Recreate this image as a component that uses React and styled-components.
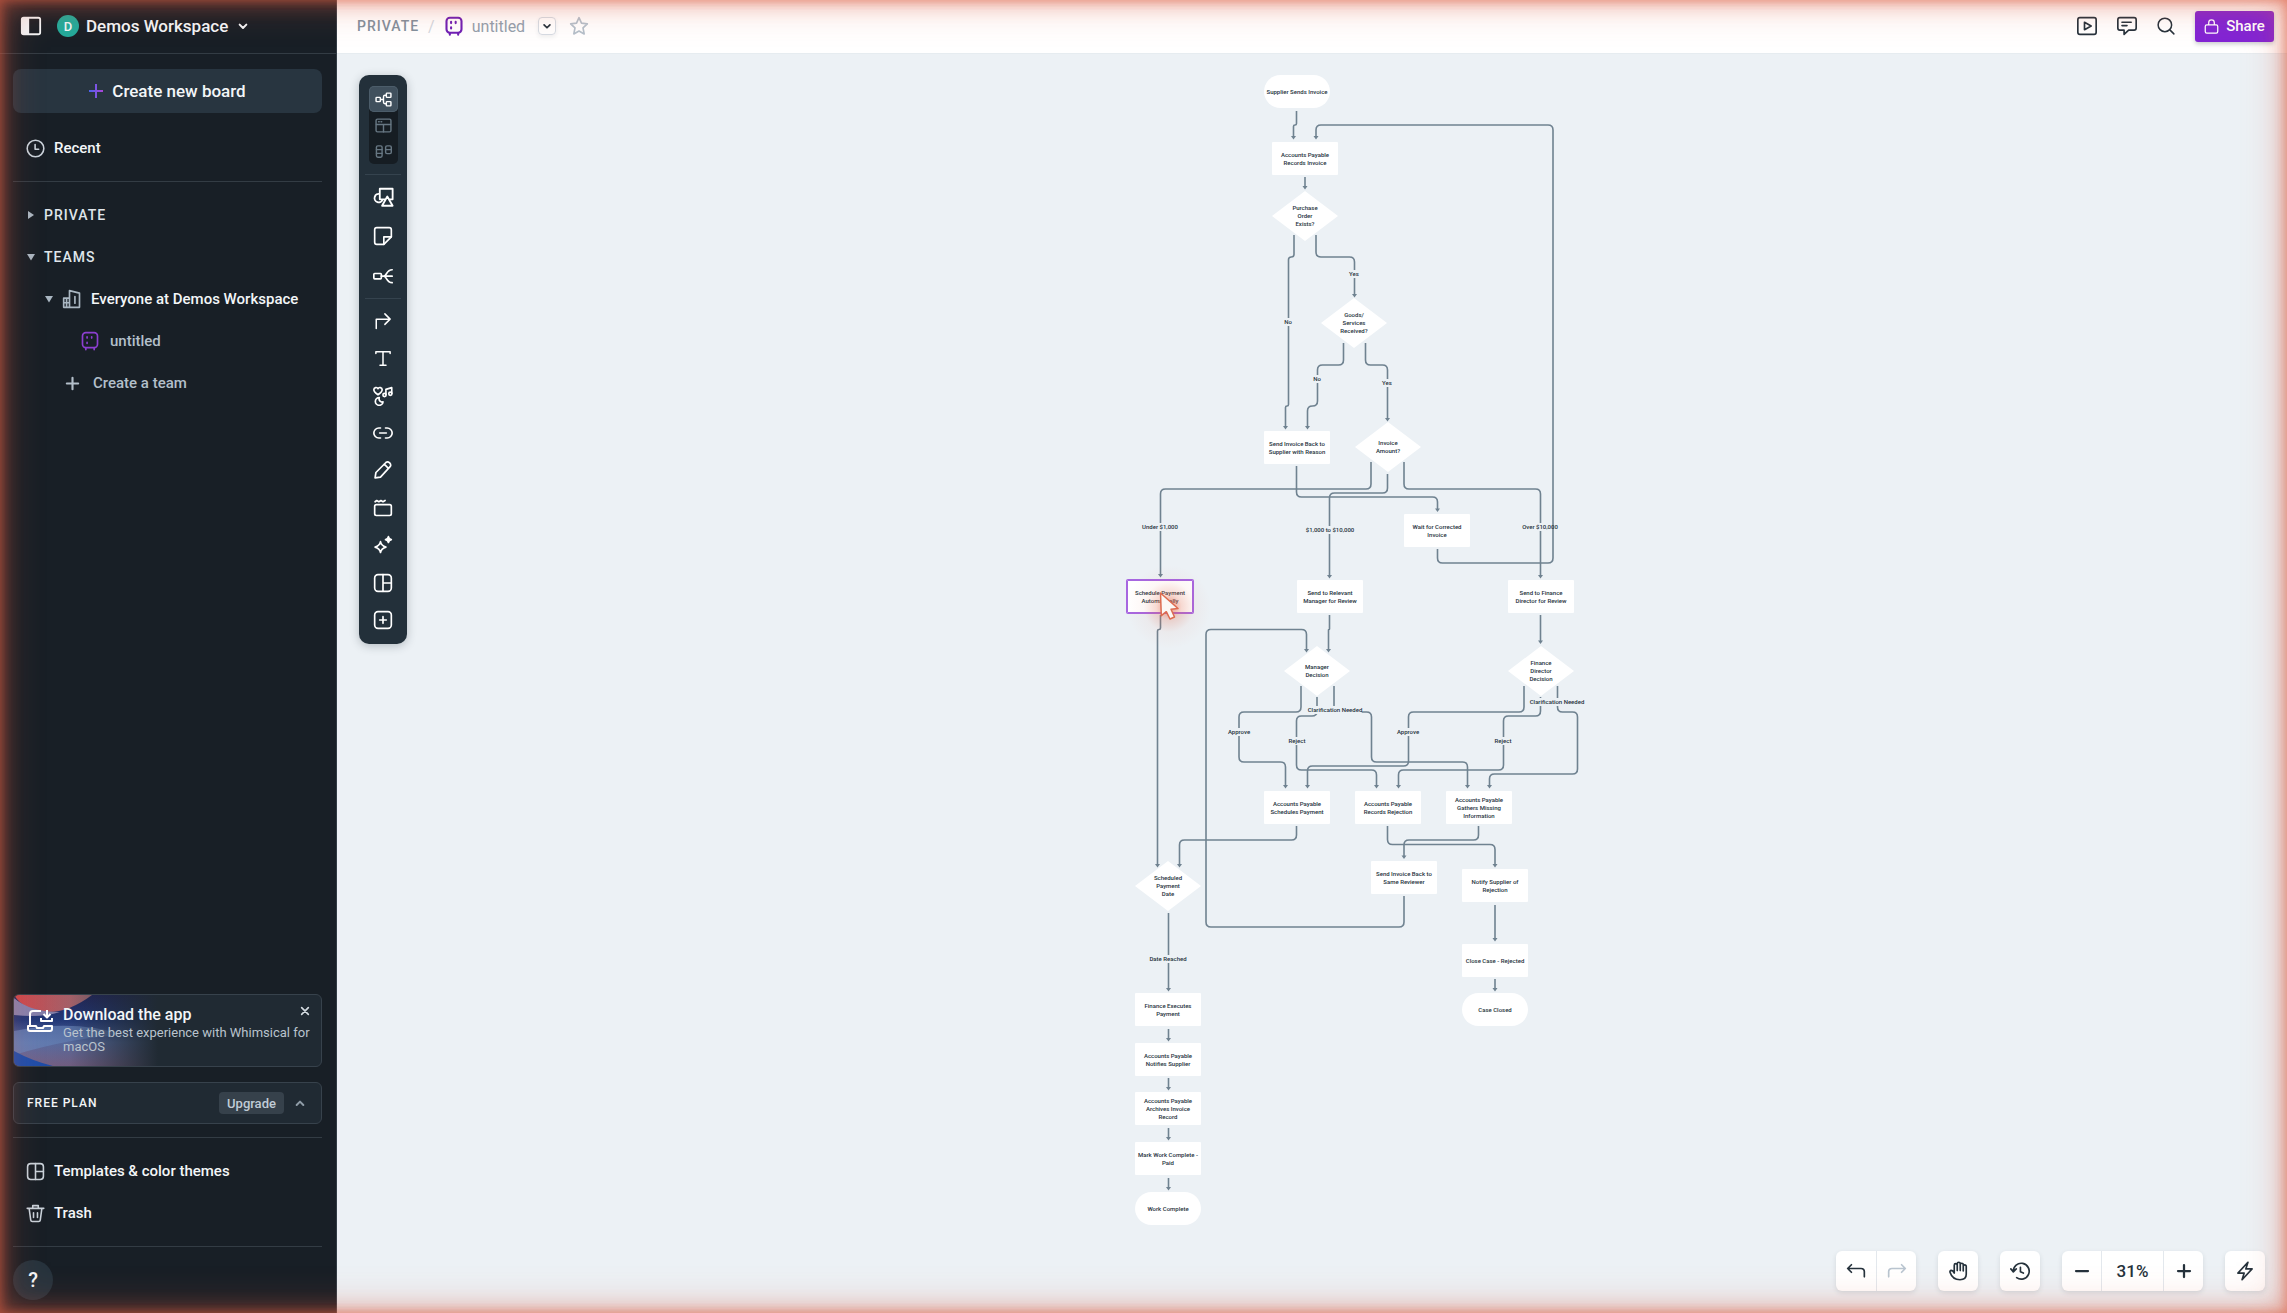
import React, { useState } from "react";
import styled, { createGlobalStyle, css } from "styled-components";

const GlobalStyle = createGlobalStyle`
    * {
        box-sizing: border-box;
    }

    body {
        margin: 0;
        font-family: Roboto, "Liberation Sans", sans-serif;
        font-size: 16px;
        color: #25323c;
    }

    button {
        font: inherit;
        color: inherit;
        background: none;
        border: none;
        padding: 0;
        cursor: pointer;
    }

    a {
        color: inherit;
        text-decoration: none;
    }

    svg {
        display: block;
        flex: none;
    }
`;

const Page = styled.div`
    display: grid;
    grid-template-columns: 337px minmax(0, 1fr);
    height: 100vh;
    overflow: hidden;
`;

/* ---------- sidebar ---------- */

const SidebarContainer = styled.aside`
    display: flex;
    flex-direction: column;
    background-color: #181f26;
    border-right: 1px solid #323c45;
    color: #f3f6f8;
    min-height: 0;
`;

const SidebarHeader = styled.header`
    display: flex;
    align-items: center;
    height: 54px;
    padding: 0 20px 1px;
    border-bottom: 1px solid #333c44;
`;

const WorkspaceButton = styled.button`
    display: flex;
    align-items: center;
    gap: 7px;
    margin-left: 15px;
    font-size: 17px;
    font-weight: 500;
`;

const Avatar = styled.span`
    display: grid;
    place-items: center;
    width: 22px;
    height: 22px;
    border-radius: 50%;
    background-color: #22ab9b;
    font-size: 13px;
`;

const SidebarBody = styled.div`
    display: flex;
    flex-direction: column;
    flex: 1;
    padding: 15px 14px 13px 13px;
`;

const CreateButton = styled.button`
    display: flex;
    align-items: center;
    justify-content: center;
    gap: 9px;
    height: 44px;
    margin-bottom: 14px;
    border-radius: 8px;
    background-color: #283540;
    font-size: 17px;
    font-weight: 500;
`;

const Divider = styled.hr`
    width: 100%;
    height: 1px;
    margin: ${(props) => props.$margin || "0"};
    border: none;
    background-color: #333c44;
`;

const NavRow = styled.a`
    display: flex;
    align-items: center;
    gap: ${(props) => props.$gap || 9}px;
    height: 42px;
    padding-left: ${(props) => props.$indent || 13}px;
    color: ${(props) => (props.$muted ? "#b3bfca" : "#f3f6f8")};
    font-size: 15px;
    font-weight: 500;
`;

const SectionRow = styled(NavRow).attrs({ as: "button" })`
    padding-left: 14px;
    color: #dfe5ea;
    font-size: 14px;
    letter-spacing: 1px;
`;

const Spacer = styled.div`
    flex: 1;
`;

const DownloadCard = styled.section`
    position: relative;
    display: flex;
    align-items: flex-start;
    height: 73px;
    padding: 11px 11px 0 13px;
    border: 1px solid #37424c;
    border-radius: 6px;
    background-color: #202a33;
    overflow: hidden;
`;

const DownloadArt = styled.svg`
    position: absolute;
    left: 0;
    top: 0;
`;

const DownloadText = styled.div`
    position: relative;
    flex: 1;
    margin-left: 10px;
`;

const DownloadIcon = styled.span`
    position: relative;
    margin-top: 4px;
`;

const DownloadTitle = styled.h2`
    margin: 0 0 2px;
    font-size: 16px;
    line-height: 18px;
    font-weight: 500;
`;

const DownloadNote = styled.p`
    margin: 0 -14px 0 0;
    font-size: 13px;
    line-height: 14px;
    color: #b9c3cd;
`;

const CloseButton = styled.button`
    width: 10px;
    height: 10px;
    color: #d3dae0;
`;

const PlanCard = styled.section`
    display: flex;
    align-items: center;
    height: 42px;
    margin-top: 15px;
    padding: 0 13px;
    border: 1px solid #37424c;
    border-radius: 6px;
    background-color: #202a33;
`;

const PlanName = styled.span`
    flex: 1;
    font-size: 12px;
    font-weight: 500;
    letter-spacing: 1px;
`;

const UpgradeButton = styled.button`
    width: 65px;
    height: 22px;
    margin-right: 8px;
    border-radius: 4px;
    background-color: #36414b;
    color: #c0ccd7;
    font-size: 13px;
    font-weight: 500;
`;

const HelpButton = styled.button`
    width: 40px;
    height: 40px;
    border-radius: 50%;
    background-color: #26333d;
    font-size: 20px;
    font-weight: 500;
`;

/* ---------- top bar ---------- */

const Main = styled.main`
    display: flex;
    flex-direction: column;
    min-width: 0;
`;

const TopBar = styled.header`
    display: flex;
    align-items: center;
    height: 54px;
    padding: 0 13px 1px 20px;
    background-color: #fff;
    border-bottom: 1px solid #e6ecf0;
`;

const Breadcrumb = styled.a`
    color: #82909d;
    font-size: 14px;
    font-weight: 500;
    letter-spacing: 1px;
`;

const Slash = styled.span`
    margin: 0 9px;
    color: #d3d9df;
`;

const BoardName = styled.span`
    margin: 0 13px 0 8px;
    color: #93a0ad;
`;

const MenuButton = styled.button`
    display: grid;
    place-items: center;
    width: 18px;
    height: 18px;
    margin-right: 13px;
    border: 1px solid #d5dce3;
    border-radius: 4px;
    box-shadow: 0 2px 4px rgba(37, 50, 60, 0.08);
`;

const TopActions = styled.div`
    display: flex;
    align-items: center;
    gap: 20px;
    margin-left: auto;
`;

const ShareButton = styled.button`
    display: flex;
    align-items: center;
    justify-content: center;
    gap: 7px;
    width: 79px;
    height: 31px;
    border-radius: 3px;
    background-color: #8224d4;
    color: #fff;
    font-size: 15px;
    font-weight: 500;
    box-shadow: 0 2px 4px rgba(37, 50, 60, 0.25);
`;

/* ---------- canvas ---------- */

const Canvas = styled.div`
    position: relative;
    flex: 1;
    background-color: #ecf1f5;
    overflow: hidden;
`;

const Toolbar = styled.div`
    position: absolute;
    left: 22px;
    top: 21px;
    width: 48px;
    padding: 11px 6px 5px;
    border-radius: 10px;
    background-color: #23303a;
    box-shadow: 0 2px 10px rgba(37, 50, 60, 0.28);
    color: #fff;
`;

const ModeSwitch = styled.div`
    display: flex;
    flex-direction: column;
    width: 29px;
    margin: 0 auto;
    border-radius: 5px;
    background-color: #161d23;
`;

const ModeButton = styled.button`
    display: grid;
    place-items: center;
    height: 26px;
    border-radius: 5px;
    color: ${(props) => (props.$active ? "#fff" : "#677783")};
    ${(props) =>
        props.$active &&
        css`
            background-color: #40505d;
            box-shadow: inset 0 0 0 1px #4c5d6a;
        `}
`;

const ToolGroup = styled.div`
    display: grid;
    grid-auto-rows: 1fr;
    height: ${(props) => props.$height}px;
`;

const ToolButton = styled.button`
    display: grid;
    place-items: center;
`;

const ToolDivider = styled.hr`
    height: 1px;
    margin: ${(props) => props.$margin};
    border: none;
    background-color: #35434e;
`;

const Diagram = styled.div`
    position: absolute;
    left: calc(50% - 212px);
    top: 6px;
    width: 480px;
    height: 1180px;
    font-size: 6px;
    line-height: 8px;
    font-weight: 500;
    text-align: center;
    white-space: pre;
`;

const Edges = styled.svg`
    position: absolute;
    inset: 0;
`;

const NODE_SHAPES = {
    step: css`
        height: 33px;
        border-radius: 1px;
        background-color: #fff;
    `,
    end: css`
        height: 33px;
        border-radius: 17px;
        background-color: #fff;
    `,
    decision: css`
        height: 50px;
        background-color: #fff;
        clip-path: polygon(50% 0, 100% 50%, 50% 100%, 0 50%);
    `,
};

const Node = styled.div`
    position: absolute;
    left: ${(props) => props.$x - 33}px;
    top: ${(props) => props.$y}px;
    width: 66px;
    display: grid;
    place-items: center;
    ${(props) => NODE_SHAPES[props.$shape]}
    ${(props) =>
        props.$selected &&
        css`
            box-shadow: 0 0 0 1px #a766e0, inset 0 0 0 1px #a766e0;
        `}
`;

const EdgeLabel = styled.span`
    position: absolute;
    left: ${(props) => props.$x}px;
    top: ${(props) => props.$y}px;
    transform: translate(-50%, -50%);

    &::before {
        content: "";
        position: absolute;
        z-index: -1;
        inset: 0 calc(50% - ${(props) => (props.$wide ? 27 : 5)}px);
        background-color: #ecf1f5;
    }
`;

const Pointer = styled.svg`
    position: absolute;
    left: 20px;
    top: 497px;
`;

const Controls = styled.div`
    position: absolute;
    right: 22px;
    bottom: 22px;
    display: flex;
    gap: 22px;
`;

const ControlGroup = styled.div`
    display: flex;
    height: 40px;
    border-radius: 6px;
    background-color: #fff;
    box-shadow: 0 2px 5px rgba(37, 50, 60, 0.12);
`;

const ControlButton = styled.button`
    display: grid;
    place-items: center;
    width: ${(props) => props.$width || 40}px;
    font-size: 17px;
    font-weight: 500;

    & + & {
        border-left: 1px solid #e3e8ed;
    }

    &:disabled {
        color: #b9c5d0;
    }
`;

const Glow = styled.div`
    position: fixed;
    inset: 0;
    z-index: 10;
    pointer-events: none;
    box-shadow: inset 3px 0 10px rgba(217, 96, 68, 0.3), inset -3px 0 10px rgba(217, 96, 68, 0.3),
        inset 0 0 20px 2px rgba(220, 95, 68, 0.4), inset 0 0 40px 2px rgba(220, 95, 68, 0.36);
`;

/* ---------- icons ---------- */

const ICONS = {
    panel: (
        <>
            <rect x="2" y="3" width="20" height="18" rx="2" />
            <path d="M3 4h6v16H3z" fill="currentColor" />
        </>
    ),
    chevron: <path d="M7 10l5 5 5-5" />,
    chevronUp: <path d="M7 15l5-5 5 5" />,
    clock: (
        <>
            <circle cx="12" cy="12" r="10.500" />
            <path d="M11.500 7v6h4.500" />
        </>
    ),
    building: (
        <>
            <path d="M9 22V2l12 3v17H2V11h7M2 16.500h7M5.500 11v11M15.500 9v8" />
        </>
    ),
    board: (
        <>
            <rect x="3" y="2" width="18" height="18" rx="4" />
            <path d="M7 22.500v-2M17 22.500v-2" />
            <path d="M8.500 7v1.500M14 7v1.500M8.500 13.500v1.500" />
        </>
    ),
    plus: <path d="M12 4v16M4 12h16" />,
    minus: <path d="M4 12h16" />,
    close: <path d="M4 4l16 16M20 4L4 20" />,
    template: (
        <>
            <rect x="2" y="2" width="20" height="20" rx="4" />
            <path d="M12 2v20M12 12h10" />
        </>
    ),
    trash: (
        <path d="M1.500 5.500h21M4 6l2 14.500Q6.200 22 8 22h8q1.800 0 2-1.500L20 6M8.500 5V2h7v3M9.500 11v6M14.500 11v6" />
    ),
    star: (
        <path d="M12 2l3 6.500 7 .9-5.200 4.900 1.400 7.200L12 18l-6.200 3.500 1.400-7.200L2 9.400l7-.9z" />
    ),
    play: (
        <>
            <rect x="1" y="2" width="22" height="20" rx="2.500" />
            <path d="M9 7.500v9l8-4.500z" />
        </>
    ),
    comment: (
        <path d="M3.500 2h17Q23 2 23 4.500v10q0 2.500-2.500 2.500H14l-5.500 5V17h-5Q1 17 1 14.500v-10Q1 2 3.500 2zM6 7.500h11M6 11.500h6" />
    ),
    search: (
        <>
            <circle cx="10.500" cy="10.500" r="9" />
            <path d="M17.500 17.500l5 5" />
        </>
    ),
    lock: (
        <path d="M4.500 9.500h15q2.500 0 2.500 2.500v8q0 2.500-2.500 2.500h-15Q2 22.500 2 20v-8q0-2.500 2.500-2.500zM7.500 9V6a4.500 4.500 0 0 1 9 0v3" />
    ),
    flow: (
        <>
            <rect x="1.500" y="9" width="6" height="6" rx="1" />
            <rect x="16" y="3" width="6.500" height="6" rx="1" />
            <rect x="16" y="15" width="6.500" height="6" rx="1" />
            <path d="M8 12h4M16 6h-2q-2 0-2 2v8q0 2 2 2h2" />
        </>
    ),
    wireframe: (
        <>
            <rect x="1.500" y="3" width="21" height="18" rx="2" />
            <path d="M2 10.500h20M12 11v10M5 6.800h1M8.500 6.800h1" />
        </>
    ),
    columns: (
        <>
            <rect x="2" y="4" width="8" height="16" rx="2" />
            <rect x="15" y="4" width="8" height="11" rx="2" />
            <path d="M2 9.300h8M2 14.600h8M15 9.300h8" />
        </>
    ),
    shapes: (
        <>
            <path d="M8.500 3H22.500v11.500h-3M8.500 3v11.500H14M8.500 8.700a4.600 4.600 0 1 0 3.200 6" />
            <path d="M16.700 11.500L22.500 21.500H11z" />
        </>
    ),
    sticky: (
        <>
            <path d="M4.500 2h15Q22 2 22 4.500V13l-9 9H4.500Q2 22 2 19.500v-15Q2 2 4.500 2z" />
            <path d="M13 22v-9h9" />
        </>
    ),
    mindmap: (
        <>
            <rect x="1" y="9" width="9" height="6.500" rx="1" />
            <path d="M10 12.200h13M23 4.500C16 4.500 16.500 12.200 13 12.200c3.500 0 3 7.800 10 7.800" />
        </>
    ),
    arrow: <path d="M3 22V9.500h18M14.500 2.500l7 7-7 7" />,
    text: <path d="M2.500 6V3.500h19V6M12 3.500v18M8 21.500h8" />,
    stickers: (
        <>
            <path d="M6 10.500C3 8.500 1 6.800 1 4.500 1 1.500 5 1 6 3.300 7 1 11 1.500 11 4.500c0 2.300-2 4-5 6z" />
            <path d="M15.500 10.500V4l7-2v7" />
            <circle cx="13.800" cy="10.800" r="1.900" />
            <circle cx="20.800" cy="9.300" r="1.900" />
            <path d="M7.500 14A4.600 4.600 0 1 0 12 19c-2.500 1-5.500-1.500-4.500-5z" />
        </>
    ),
    link: <path d="M9 6H7a6 6 0 0 0 0 12h2M15 6h2a6 6 0 0 1 0 12h-2M8 12h8" />,
    pencil: (
        <path d="M2.500 21.500l1-6.500L15.500 3q2-1.700 4.500.5 2.200 2.500.5 4.500L9 20.500zM13.500 5l5 5" />
    ),
    frame: (
        <>
            <rect x="2" y="8" width="20" height="13" rx="2" />
            <path d="M2.500 4.500l2-1.500L7 4.500 9.500 3 12 4.500 14.500 3" />
        </>
    ),
    sparkle: (
        <>
            <path d="M9 8q1 5 6.500 6.500Q10 16 9 21q-1-5-6.500-6.500Q8 13 9 8z" />
            <path d="M18.500 2q.5 3 3.500 3.500-3 .5-3.500 3.500-.5-3-3.500-3.500 3-.5 3.500-3.500z" fill="currentColor" />
        </>
    ),
    add: (
        <>
            <rect x="2" y="2" width="20" height="20" rx="4" />
            <path d="M12 8v8M8 12h8" />
        </>
    ),
    undo: <path d="M6.500 4.500L2 9l4.500 4.500M2 9h16q4 0 4 4v6" />,
    redo: <path d="M17.500 4.500L22 9l-4.500 4.500M22 9H6q-4 0-4 4v6" />,
    hand: (
        <path d="M7.500 14.500V5a1.800 1.800 0 0 1 3.600 0v6.500V3.300a1.800 1.800 0 0 1 3.600 0v8.200V4.500a1.800 1.800 0 0 1 3.600 0v7.500V6.500a1.800 1.800 0 0 1 3.600 0V16c0 4.500-3.500 6.500-7.500 6.500-6 0-10-3-12-9q-.3-2 1.500-2.200c1.600 0 2.600 1.500 3.600 3.200z" />
    ),
    history: <path d="M1 9.500L4 13l3.500-3.500M4 12.500A9.500 9.500 0 1 1 8 20M12.500 7.500V13l3.500 1.500" />,
    bolt: <path d="M15.500 1.500L3.500 14.500H11l-2.500 8L20.500 9.500H13z" />,
};

function Icon({ name, size = 20, stroke = 2, color = "currentColor" }) {
    return (
        <svg width={size} height={size} viewBox="0 0 24 24" fill="none" stroke={color} strokeWidth={stroke} strokeLinecap="round" strokeLinejoin="round" aria-hidden="true">
            {ICONS[name]}
        </svg>
    );
}

function Caret({ open }) {
    return (
        <svg width="8" height="8" viewBox="0 0 8 8" fill="#a9b6c1" aria-hidden="true">
            <path d={open ? "M0 1h8L4 7.500z" : "M1 0l6 4-6 4z"} />
        </svg>
    );
}

/* ---------- diagram data ---------- */

const NODES = [
    { x: 197, y: 15, shape: "end", text: "Supplier Sends Invoice" },
    { x: 205, y: 82, shape: "step", text: "Accounts Payable\nRecords Invoice" },
    { x: 205, y: 131, shape: "decision", text: "Purchase\nOrder\nExists?" },
    { x: 254, y: 238, shape: "decision", text: "Goods/\nServices\nReceived?" },
    { x: 197, y: 371, shape: "step", text: "Send Invoice Back to\nSupplier with Reason" },
    { x: 288, y: 362, shape: "decision", text: "Invoice\nAmount?" },
    { x: 337, y: 454, shape: "step", text: "Wait for Corrected\nInvoice" },
    { x: 60, y: 520, shape: "step", text: "Schedule Payment\nAutomatically", selected: true },
    { x: 230, y: 520, shape: "step", text: "Send to Relevant\nManager for Review" },
    { x: 441, y: 520, shape: "step", text: "Send to Finance\nDirector for Review" },
    { x: 217, y: 586, shape: "decision", text: "Manager\nDecision" },
    { x: 441, y: 586, shape: "decision", text: "Finance\nDirector\nDecision" },
    { x: 197, y: 731, shape: "step", text: "Accounts Payable\nSchedules Payment" },
    { x: 288, y: 731, shape: "step", text: "Accounts Payable\nRecords Rejection" },
    { x: 379, y: 731, shape: "step", text: "Accounts Payable\nGathers Missing\nInformation" },
    { x: 68, y: 801, shape: "decision", text: "Scheduled\nPayment\nDate" },
    { x: 304, y: 801, shape: "step", text: "Send Invoice Back to\nSame Reviewer" },
    { x: 395, y: 809, shape: "step", text: "Notify Supplier of\nRejection" },
    { x: 395, y: 884, shape: "step", text: "Close Case - Rejected" },
    { x: 395, y: 933, shape: "end", text: "Case Closed" },
    { x: 68, y: 933, shape: "step", text: "Finance Executes\nPayment" },
    { x: 68, y: 983, shape: "step", text: "Accounts Payable\nNotifies Supplier" },
    { x: 68, y: 1032, shape: "step", text: "Accounts Payable\nArchives Invoice\nRecord" },
    { x: 68, y: 1082, shape: "step", text: "Mark Work Complete -\nPaid" },
    { x: 68, y: 1132, shape: "end", text: "Work Complete" },
];

const LABELS = [
    { x: 254, y: 214, text: "Yes" },
    { x: 188, y: 262, text: "No" },
    { x: 217, y: 319, text: "No" },
    { x: 287, y: 323, text: "Yes" },
    { x: 60, y: 467, text: "Under $1,000" },
    { x: 230, y: 470, text: "$1,000 to $10,000" },
    { x: 440, y: 467, text: "Over $10,000" },
    { x: 235, y: 650, text: "Clarification Needed", wide: true },
    { x: 139, y: 672, text: "Approve" },
    { x: 197, y: 681, text: "Reject" },
    { x: 308, y: 672, text: "Approve" },
    { x: 403, y: 681, text: "Reject" },
    { x: 457, y: 642, text: "Clarification Needed", wide: true },
    { x: 68, y: 899, text: "Date Reached" },
];

// x, y, then alternating y / x stops, always leaving downwards
const EDGES = [
    [196.5, 51, 65, 193.5, 79],
    [337.5, 489, 503, 453, 65, 216, 79],
    [205, 117, 129],
    [194, 175, 197, 188.5, 346, 185.5, 369],
    [216, 175, 197, 254.5, 237],
    [243.5, 283, 305, 217.5, 346, 207.5, 369],
    [265.5, 283, 305, 287.5, 361],
    [196.5, 406, 437, 337.5, 451.5],
    [271, 402, 429, 60.5, 517],
    [287.5, 414, 433, 229.5, 518],
    [304, 402, 429, 440.5, 518],
    [60.5, 555, 569.5, 57.5, 807],
    [229.5, 555, 569.5, 228.5, 592],
    [440.5, 555, 583.5],
    [304, 836, 867, 106, 569.5, 206.5, 592],
    [201, 626, 652, 139, 702, 185.5, 728],
    [217, 637, 656, 196.5, 710, 276.5, 728],
    [234, 626, 652, 271.5, 702, 367.5, 728],
    [424, 626, 652, 308.5, 706, 207.5, 728],
    [440.5, 637, 656, 403.5, 710, 298.5, 728],
    [457.5, 626, 652, 477.5, 714, 389.5, 728],
    [196.5, 766, 780, 79.5, 807],
    [287.5, 766, 784.5, 395, 807],
    [378.5, 766, 780, 304, 798.5],
    [395, 845, 881],
    [395, 919, 931],
    [68.5, 853, 931],
    [68.5, 969, 981],
    [68.5, 1018, 1030],
    [68.5, 1068, 1080],
    [68.5, 1118, 1130],
];

function edgePoints([x, y, ...stops]) {
    const points = [[x, y]];
    stops.forEach((stop, i) => {
        const [px, py] = points[points.length - 1];
        points.push(i % 2 === 0 ? [px, stop] : [stop, py]);
    });
    return points;
}

function edgePath(points) {
    let d = `M${points[0]}`;
    for (let i = 1; i < points.length - 1; i++) {
        const [ax, ay] = points[i - 1];
        const [bx, by] = points[i];
        const [cx, cy] = points[i + 1];
        const inLength = Math.abs(bx - ax) + Math.abs(by - ay);
        const outLength = Math.abs(cx - bx) + Math.abs(cy - by);
        const r = Math.min(5, inLength / 2, outLength / 2);
        const from = [bx - Math.sign(bx - ax) * r, by - Math.sign(by - ay) * r];
        const to = [bx + Math.sign(cx - bx) * r, by + Math.sign(cy - by) * r];
        d += `L${from}Q${bx},${by} ${to}`;
    }
    const [ex, ey] = points[points.length - 1];
    return `${d}L${ex},${ey - 2}`;
}

function Edge({ stops }) {
    const points = edgePoints(stops);
    const [x, y] = points[points.length - 1];
    return (
        <>
            <path d={edgePath(points)} fill="none" stroke="#6f8290" strokeWidth="1.6" />
            <path d={`M${x - 2.5},${y - 3}h5l-2.500,3.500z`} fill="#6f8290" />
        </>
    );
}

function Flowchart() {
    return (
        <Diagram>
            <Edges width="480" height="1180">
                {EDGES.map((stops, i) => (
                    <Edge key={i} stops={stops} />
                ))}
            </Edges>
            {LABELS.map((label) => (
                <EdgeLabel key={`${label.x}-${label.y}`} $x={label.x} $y={label.y} $wide={label.wide}>
                    {label.text}
                </EdgeLabel>
            ))}
            {NODES.map((node) => (
                <Node key={`${node.x}-${node.y}`} $x={node.x} $y={node.y} $shape={node.shape} $selected={node.selected}>
                    {node.text}
                </Node>
            ))}
            <Pointer width="100" height="100" viewBox="0 0 100 100">
                <defs>
                    <radialGradient id="halo">
                        <stop offset="0" stopColor="#e0583a" stopOpacity="0.7" />
                        <stop offset="0.3" stopColor="#e0694c" stopOpacity="0.25" />
                        <stop offset="0.6" stopColor="#e0694c" stopOpacity="0.05" />
                        <stop offset="1" stopColor="#e0694c" stopOpacity="0" />
                    </radialGradient>
                </defs>
                <circle cx="49" cy="50" r="42" fill="url(#halo)" />
                <path d="M40.500 36l17.500 15.500-7 .8 3.500 7.700-4.500 2-3.700-7.300-5 4z" fill="#fbf8f5" stroke="#dd6b4f" strokeWidth="1.500" strokeLinejoin="round" />
            </Pointer>
        </Diagram>
    );
}

/* ---------- page parts ---------- */

function DownloadBanner({ onClose }) {
    return (
        <DownloadCard>
            <DownloadArt width="160" height="73" viewBox="0 0 160 73">
                <defs>
                    <linearGradient id="fade">
                        <stop offset="0" stopColor="#202a33" stopOpacity="0" />
                        <stop offset="0.35" stopColor="#202a33" stopOpacity="0.1" />
                        <stop offset="0.9" stopColor="#202a33" />
                    </linearGradient>
                    <linearGradient id="sky" x2="0" y2="1">
                        <stop offset="0" stopColor="#21245c" />
                        <stop offset="0.35" stopColor="#233a7d" />
                        <stop offset="0.65" stopColor="#5c6fa6" />
                        <stop offset="1" stopColor="#7b6185" />
                    </linearGradient>
                    <linearGradient id="sun">
                        <stop offset="0" stopColor="#d0474c" />
                        <stop offset="1" stopColor="#a7717b" />
                    </linearGradient>
                </defs>
                <rect width="160" height="73" fill="url(#sky)" />
                <path d="M0 0h78Q54 18 32 17T0 0z" fill="url(#sun)" />
                <path d="M0 3q16 14 46 14-18 6-46 3z" fill="#8883b0" />
                <path d="M0 36q60-12 110 4Q60 42 0 60z" fill="#6a86bd" opacity="0.7" />
                <path d="M0 56q22 12 48 17H0z" fill="#1f4fae" />
                <rect width="160" height="73" fill="url(#fade)" />
            </DownloadArt>
            <DownloadIcon>
                <svg width="26" height="22" viewBox="0 0 26 22" fill="none" stroke="#fff" strokeWidth="2" strokeLinejoin="round">
                    <path d="M14 1H6Q3 1 3 4v11M1 16h8l1 2h6l1-2h8v3q0 2-2 2H3q-2 0-2-2zM20 0v7M16.500 4L20 7.500 23.500 4M14 8v3h11V8" />
                </svg>
            </DownloadIcon>
            <DownloadText>
                <DownloadTitle>Download the app</DownloadTitle>
                <DownloadNote>Get the best experience with Whimsical for macOS</DownloadNote>
            </DownloadText>
            <CloseButton aria-label="Dismiss" onClick={onClose}>
                <Icon name="close" size={10} stroke={4} />
            </CloseButton>
        </DownloadCard>
    );
}

function Sidebar() {
    const [showDownload, setShowDownload] = useState(true);

    return (
        <SidebarContainer>
            <SidebarHeader>
                <button aria-label="Toggle sidebar">
                    <Icon name="panel" size={22} />
                </button>
                <WorkspaceButton>
                    <Avatar>D</Avatar>
                    Demos Workspace
                    <Icon name="chevron" size={16} stroke={3} />
                </WorkspaceButton>
            </SidebarHeader>
            <SidebarBody>
                <CreateButton>
                    <svg width="14" height="14" viewBox="0 0 14 14">
                        <defs>
                            <linearGradient id="plusFill">
                                <stop offset="0" stopColor="#4a63ee" />
                                <stop offset="1" stopColor="#ac45d8" />
                            </linearGradient>
                        </defs>
                        <path d="M6 0h2v6h6v2H8v6H6V8H0V6h6z" fill="url(#plusFill)" />
                    </svg>
                    Create new board
                </CreateButton>
                <NavRow href="#recent">
                    <Icon name="clock" size={19} color="#c9d2da" />
                    Recent
                </NavRow>
                <Divider $margin="12px 0" />
                <SectionRow>
                    <Caret />
                    PRIVATE
                </SectionRow>
                <SectionRow>
                    <Caret open />
                    TEAMS
                </SectionRow>
                <NavRow href="#team" $indent={32}>
                    <Caret open />
                    <Icon name="building" size={20} color="#a9b6c1" />
                    Everyone at Demos Workspace
                </NavRow>
                <NavRow href="#untitled" $indent={67} $gap={10} $muted>
                    <Icon name="board" size={20} color="#8c3fd0" />
                    untitled
                </NavRow>
                <NavRow href="#create-team" $indent={51} $gap={12} $muted>
                    <Icon name="plus" size={17} stroke={3} />
                    Create a team
                </NavRow>
                <Spacer />
                {showDownload && <DownloadBanner onClose={() => setShowDownload(false)} />}
                <PlanCard>
                    <PlanName>FREE PLAN</PlanName>
                    <UpgradeButton>Upgrade</UpgradeButton>
                    <button aria-label="Plan details">
                        <Icon name="chevronUp" size={16} stroke={3} color="#8f9ca7" />
                    </button>
                </PlanCard>
                <Divider $margin="13px 0 12px" />
                <NavRow href="#templates">
                    <Icon name="template" size={19} color="#c9d2da" />
                    Templates &amp; color themes
                </NavRow>
                <NavRow href="#trash">
                    <Icon name="trash" size={19} color="#c9d2da" />
                    Trash
                </NavRow>
                <Divider $margin="12px 0 13px" />
                <HelpButton aria-label="Help">?</HelpButton>
            </SidebarBody>
        </SidebarContainer>
    );
}

function Header() {
    return (
        <TopBar>
            <Breadcrumb href="#private">PRIVATE</Breadcrumb>
            <Slash>/</Slash>
            <Icon name="board" size={20} color="#6f1fb5" stroke={2.5} />
            <BoardName>untitled</BoardName>
            <MenuButton aria-label="Board menu">
                <Icon name="chevron" size={14} stroke={3} />
            </MenuButton>
            <button aria-label="Star board">
                <Icon name="star" size={20} color="#b4c0cb" />
            </button>
            <TopActions>
                <button aria-label="Present">
                    <Icon name="play" />
                </button>
                <button aria-label="Comments">
                    <Icon name="comment" />
                </button>
                <button aria-label="Search">
                    <Icon name="search" size={18} />
                </button>
                <ShareButton>
                    <Icon name="lock" size={15} />
                    Share
                </ShareButton>
            </TopActions>
        </TopBar>
    );
}

const MODES = ["flow", "wireframe", "columns"];
const SHAPE_TOOLS = ["shapes", "sticky", "mindmap"];
const DRAW_TOOLS = ["arrow", "text", "stickers", "link", "pencil", "frame", "sparkle", "template", "add"];

function Tools() {
    const [mode, setMode] = useState("flow");

    return (
        <Toolbar>
            <ModeSwitch>
                {MODES.map((name) => (
                    <ModeButton key={name} aria-label={name} $active={name === mode} onClick={() => setMode(name)}>
                        <Icon name={name} size={17} />
                    </ModeButton>
                ))}
            </ModeSwitch>
            <ToolDivider $margin="10px 0 2px" />
            <ToolGroup $height={119}>
                {SHAPE_TOOLS.map((name) => (
                    <ToolButton key={name} aria-label={name}>
                        <Icon name={name} size={name === "shapes" ? 22 : 20} />
                    </ToolButton>
                ))}
            </ToolGroup>
            <ToolDivider $margin="2px 0 3px" />
            <ToolGroup $height={337}>
                {DRAW_TOOLS.map((name) => (
                    <ToolButton key={name} aria-label={name}>
                        <Icon name={name} size={name === "arrow" || name === "text" ? 18 : 20} />
                    </ToolButton>
                ))}
            </ToolGroup>
        </Toolbar>
    );
}

function ViewControls() {
    return (
        <Controls>
            <ControlGroup>
                <ControlButton aria-label="Undo">
                    <Icon name="undo" />
                </ControlButton>
                <ControlButton aria-label="Redo" disabled>
                    <Icon name="redo" />
                </ControlButton>
            </ControlGroup>
            <ControlGroup>
                <ControlButton aria-label="Pan">
                    <Icon name="hand" />
                </ControlButton>
            </ControlGroup>
            <ControlGroup>
                <ControlButton aria-label="History">
                    <Icon name="history" />
                </ControlButton>
            </ControlGroup>
            <ControlGroup>
                <ControlButton aria-label="Zoom out" $width={39}>
                    <Icon name="minus" size={18} stroke={3} />
                </ControlButton>
                <ControlButton $width={62}>31%</ControlButton>
                <ControlButton aria-label="Zoom in">
                    <Icon name="plus" size={18} stroke={3} />
                </ControlButton>
            </ControlGroup>
            <ControlGroup>
                <ControlButton aria-label="Shortcuts">
                    <Icon name="bolt" />
                </ControlButton>
            </ControlGroup>
        </Controls>
    );
}

export default function App() {
    return (
        <Page>
            <GlobalStyle />
            <Sidebar />
            <Main>
                <Header />
                <Canvas>
                    <Flowchart />
                    <Tools />
                    <ViewControls />
                </Canvas>
            </Main>
            <Glow />
        </Page>
    );
}
